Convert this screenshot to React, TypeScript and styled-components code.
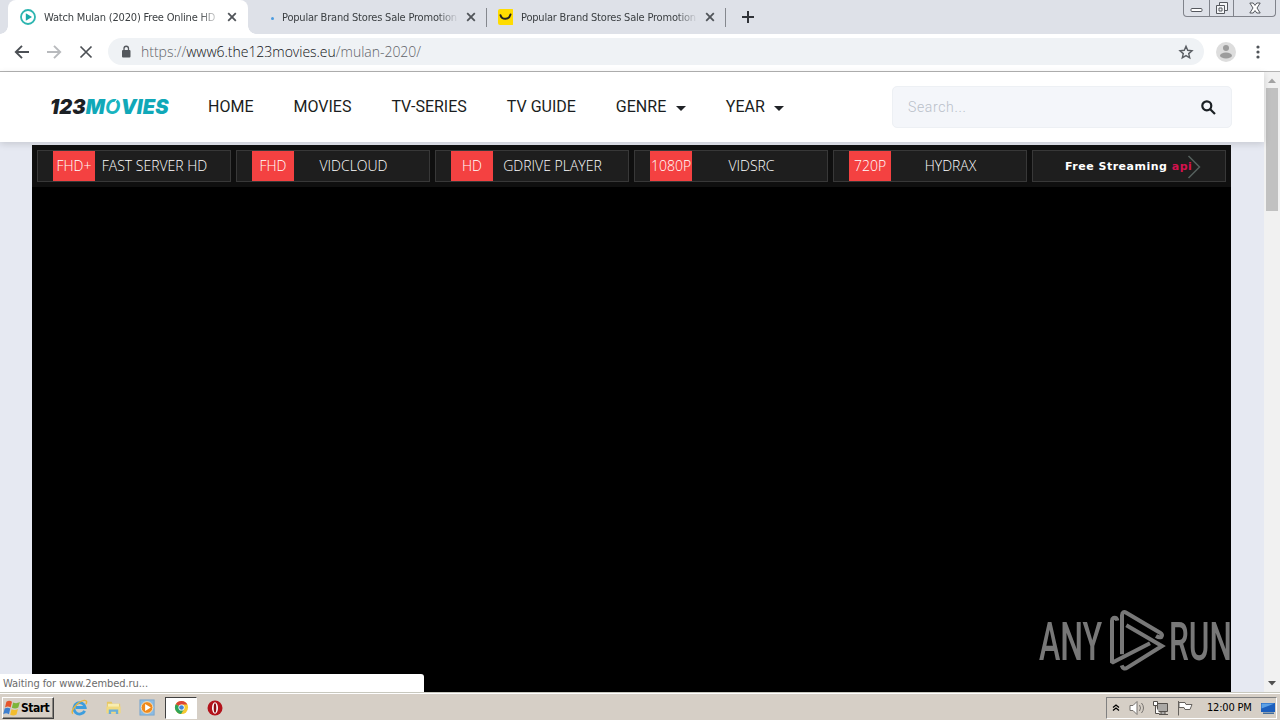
import React from 'react';
import styled, { createGlobalStyle } from 'styled-components';

const uiFont = "'DejaVu Sans Condensed', 'DejaVu Sans', sans-serif";

const GlobalStyle = createGlobalStyle`
  * {
    box-sizing: border-box;
  }

  body {
    margin: 0;
    overflow: hidden;
  }
`;

const Screen = styled.div`
  display: flex;
  flex-direction: column;
  width: 1280px;
  height: 720px;
  overflow: hidden;
  position: relative;
  font-family: ${uiFont};
`;

/* Browser chrome */

const TabStrip = styled.div`
  display: flex;
  flex: none;
  height: 34px;
  padding-left: 8px;
  background: #dee1e8;
`;

const TabBase = styled.div`
  display: flex;
  align-items: center;
  position: relative;
  height: 34px;
  width: 239px;
  padding-left: 10px;
  gap: 8px;
`;

const ActiveTab = styled(TabBase)`
  width: 240px;
  padding-left: 12px;
  background: #fff;
  border-radius: 8px 8px 0 0;

  &::before,
  &::after {
    content: '';
    position: absolute;
    bottom: 0;
    width: 8px;
    height: 8px;
  }

  &::before {
    left: -8px;
    background: radial-gradient(circle at 0 0, transparent 7.5px, #fff 8px);
  }

  &::after {
    right: -8px;
    background: radial-gradient(circle at 100% 0, transparent 7.5px, #fff 8px);
  }
`;

const IdleTab = styled(TabBase)`
  &::after {
    content: '';
    position: absolute;
    right: 0;
    top: 8px;
    width: 1px;
    height: 19px;
    background: #85888e;
  }
`;

const TabTitle = styled.span<{ $spacing: number; $width?: number }>`
  width: ${props => props.$width ?? 175}px;
  overflow: hidden;
  white-space: nowrap;
  font-size: 11px;
  line-height: 16px;
  padding-top: 1px;
  letter-spacing: ${props => props.$spacing}px;
  color: #3c4043;
  mask-image: linear-gradient(to right, #000 155px, transparent 177px);
`;

const TabIcon = styled.svg`
  flex: none;
  width: 16px;
  height: 16px;
`;

const CloseIcon = styled.svg`
  flex: none;
  width: 10px;
  height: 10px;
  margin-left: 1px;
`;

const NewTab = styled.svg`
  width: 14px;
  height: 14px;
  margin: 10px 0 0 15px;
`;

const WindowControls = styled.div`
  display: flex;
  width: 93px;
  height: 17px;
  margin: 0 4px 0 auto;
  border: 1px solid #80838b;
  border-top: 0;
  border-radius: 0 0 4px 4px;
`;

const WindowButton = styled.div<{ $width: number }>`
  display: flex;
  align-items: center;
  justify-content: center;
  width: ${props => props.$width}px;

  & + & {
    border-left: 1px solid #80838b;
  }
`;

const Toolbar = styled.div`
  display: flex;
  flex: none;
  align-items: center;
  height: 38px;
  padding: 0 10px 2px 14px;
  background: #fff;
  border-bottom: 1px solid #b3b3b3;
`;

const ToolIcon = styled.svg`
  flex: none;
  width: 16px;
  height: 16px;
  margin-right: 16px;
`;

const Omnibox = styled.div`
  display: flex;
  align-items: center;
  width: 1096px;
  height: 27px;
  margin-left: -2px;
  padding: 0 10px 0 12px;
  border-radius: 14px;
  background: #eff2f5;
`;

const Url = styled.div`
  flex: 1;
  margin-left: 9px;
  font-family: 'Open Sans', 'Noto Sans', sans-serif;
  font-weight: 300;
  font-size: 14px;
  line-height: 20px;
  letter-spacing: -0.02px;
  color: #5f6368;

  span {
    color: #101114;
  }
`;

/* Page */

const Viewport = styled.div`
  display: flex;
  flex: 1;
  min-height: 0;
  position: relative;
`;

const Page = styled.main`
  display: flex;
  flex-direction: column;
  width: 1264px;
  background: #e6e9f2;
`;

const Header = styled.header`
  display: flex;
  flex: none;
  align-items: center;
  height: 70px;
  padding: 0 32px 0 50px;
  background: #fff;
  box-shadow: 0 2px 7px rgba(0, 0, 0, 0.14);
  z-index: 1;
`;

const Logo = styled.div`
  width: 120px;
  margin-right: 38px;
  font: italic 900 20px/24px Inter, sans-serif;
  letter-spacing: 0.15px;
  white-space: nowrap;
  color: #1b2024;

  b {
    font-weight: 900;
    color: #10a8b8;
  }
`;

const LogoRing = styled.i`
  position: relative;
  font-weight: 700;
  color: #18b4c0;

  &::after {
    content: '';
    position: absolute;
    left: 10px;
    top: 4px;
    width: 1px;
    height: 5px;
    background: #fff;
    transform: rotate(35deg);
  }
`;

const Nav = styled.nav`
  display: flex;
  flex: 1;
  gap: 40px;
`;

const NavItem = styled.a`
  display: flex;
  align-items: center;
  font: 400 16px/24px Roboto, sans-serif;
  white-space: nowrap;
  color: #1a1d20;
`;

const Caret = styled.i`
  margin: 2px 0 0 9.6px;
  border: 5px solid transparent;
  border-top-color: #202327;
  border-bottom: 0;
`;

const SearchBox = styled.div`
  display: flex;
  align-items: center;
  justify-content: space-between;
  width: 340px;
  height: 42px;
  padding: 0 15px;
  border: 1px solid #edf0f4;
  border-radius: 5px;
  background: #f4f6fa;
  font: 300 14px/20px Roboto, sans-serif;
  letter-spacing: 0.65px;
  color: #b9c0c9;
`;

const Player = styled.section`
  flex: 1;
  width: 1199px;
  margin: 3px 0 0 32px;
  background: #000;
  position: relative;
  z-index: 2;
`;

const ServerBar = styled.div`
  display: flex;
  gap: 5px;
  height: 42px;
  padding: 5px 5px;
  background: #0f0f0f;
`;

const ServerButton = styled.div`
  display: flex;
  flex: none;
  align-items: center;
  width: 194px;
  height: 32px;
  padding: 0 16px 0 15px;
  border: 1px solid #383838;
  background: #1e1e1e;
  font: 350 14px/30px 'Open Sans', 'Noto Sans', sans-serif;
  color: #fff;
`;

const Quality = styled.span`
  flex: none;
  width: 42px;
  height: 30px;
  background: #f44141;
  text-align: center;
  white-space: nowrap;
`;

const ServerName = styled.span`
  flex: 1;
  text-align: center;
  white-space: nowrap;
`;

const ApiButton = styled(ServerButton)`
  position: relative;
  padding: 1px 0 0 32px;
  font: 700 11px/30px 'DejaVu Sans', sans-serif;
  letter-spacing: 0.5px;
  white-space: pre;

  b {
    color: #d5124e;
  }
`;

const ApiChevron = styled.svg`
  position: absolute;
  left: 154px;
  top: 4px;
  width: 14px;
  height: 24px;
`;

const ScrollTrack = styled.div`
  display: flex;
  flex-direction: column;
  align-items: center;
  width: 16px;
  background: #f1f1f1;
`;

const ScrollThumb = styled.div`
  width: 12px;
  height: 123px;
  margin-bottom: auto;
  background: #c1c1c1;
`;

const ScrollArrow = styled.svg`
  width: 16px;
  height: 16px;
`;

const StatusBubble = styled.div`
  position: absolute;
  left: 0;
  bottom: 0;
  z-index: 3;
  width: 424px;
  height: 18px;
  padding-left: 3px;
  border-radius: 0 3px 0 0;
  background: #fff;
  font-size: 11px;
  line-height: 19px;
  letter-spacing: -0.07px;
  color: #6b6b6b;
`;

const Watermark = styled.div`
  position: absolute;
  left: 1039px;
  top: 536px;
  z-index: 3;
  width: 193px;
  height: 66px;
  color: #858585;
  opacity: 0.9;
`;

const WatermarkWord = styled.span<{ $left: number; $scale: number }>`
  position: absolute;
  left: ${props => props.$left}px;
  top: 3px;
  font: 500 53px/62px Roboto, sans-serif;
  transform: scaleX(${props => props.$scale});
  transform-origin: 0 0;
`;

const WatermarkLogo = styled.svg`
  position: absolute;
  left: 69px;
  top: 0;
  width: 58px;
  height: 66px;
`;

/* Taskbar */

const Taskbar = styled.footer`
  display: flex;
  flex: none;
  align-items: center;
  height: 28px;
  padding: 2px 3px 0 2px;
  border-top: 1px solid #c8c8be;
  box-shadow: inset 0 1px #fff;
  background: #d6cfc6;
`;

const StartButton = styled.div`
  display: flex;
  align-items: center;
  width: 52px;
  height: 22px;
  border: 1px solid;
  border-color: #fff #404040 #404040 #fff;
  box-shadow: inset -1px -1px #8a8680;
  font: 700 12px/20px ${uiFont};
  letter-spacing: -0.5px;
  color: #000;
`;

const QuickLaunch = styled.div`
  display: flex;
  align-items: center;
  margin-left: 17px;
`;

const QuickIcon = styled.svg`
  width: 17px;
  height: 17px;
  margin-right: 17px;
`;

const RunningApp = styled.div`
  display: flex;
  align-items: center;
  justify-content: center;
  width: 32px;
  height: 22px;
  margin: 0 10px 0 -8px;
  border: 1px solid;
  border-color: #404040 #fff #fff #404040;
  background: #fff;

  svg {
    width: 15px;
    height: 15px;
  }
`;

const Tray = styled.div`
  display: flex;
  align-items: center;
  width: 171px;
  height: 22px;
  margin-left: auto;
  padding-left: 5px;
  border: 1px solid;
  border-color: #808080 #fff #fff #808080;
`;

const TrayIcon = styled.svg<{ $gap: number }>`
  flex: none;
  width: 16px;
  height: 16px;
  margin-right: ${props => props.$gap}px;
`;

const Clock = styled.span`
  flex: none;
  width: 53px;
  font-size: 11px;
  line-height: 16px;
  letter-spacing: -0.2px;
  white-space: nowrap;
  color: #000;
`;

const navItems = [
  { label: 'HOME' },
  { label: 'MOVIES' },
  { label: 'TV-SERIES' },
  { label: 'TV GUIDE' },
  { label: 'GENRE', menu: true },
  { label: 'YEAR', menu: true }
];

const servers = [
  { quality: 'FHD+', name: 'FAST SERVER HD' },
  { quality: 'FHD', name: 'VIDCLOUD' },
  { quality: 'HD', name: 'GDRIVE PLAYER' },
  { quality: '1080P', name: 'VIDSRC' },
  { quality: '720P', name: 'HYDRAX' }
];

function Close() {
  return (
    <CloseIcon viewBox="0 0 10 10">
      <path d="M1.2 1.2l7.6 7.6M8.8 1.2L1.2 8.8" stroke="#505459" strokeWidth="1.8" />
    </CloseIcon>
  );
}

function BrowserTabs() {
  return (
    <TabStrip>
      <ActiveTab>
        <TabIcon viewBox="0 0 16 16">
          <circle cx="8" cy="8" r="7" fill="#fff" stroke="#2db5b0" strokeWidth="1.8" />
          <path d="M5.8 4.2v7.6L12 8z" fill="#18a8a8" />
        </TabIcon>
        <TabTitle $spacing={-0.18} $width={174}>
          Watch Mulan (2020) Free Online HD
        </TabTitle>
        <Close />
      </ActiveTab>
      <IdleTab>
        <TabIcon viewBox="0 0 16 16">
          <circle cx="14.5" cy="9.5" r="1.5" fill="#4b9be0" />
        </TabIcon>
        <TabTitle $spacing={-0.2}>Popular Brand Stores Sale Promotion</TabTitle>
        <Close />
      </IdleTab>
      <IdleTab>
        <TabIcon viewBox="0 0 16 16">
          <rect x="1" width="16" height="16" rx="2" fill="#ffdc00" />
          <path d="M3.5 6.2c1.500 5 8.500 5 10-.7" fill="none" stroke="#222" strokeWidth="2" strokeLinecap="round" />
        </TabIcon>
        <TabTitle $spacing={-0.2}>Popular Brand Stores Sale Promotion</TabTitle>
        <Close />
      </IdleTab>
      <NewTab viewBox="0 0 14 14">
        <path d="M7 1v12M1 7h12" stroke="#303338" strokeWidth="2" />
      </NewTab>
      <WindowControls>
        <WindowButton $width={25}>
          <svg width="13" height="16">
            <rect x="1" y="8.5" width="11" height="3" rx="1" fill="#fff" stroke="#55585e" />
          </svg>
        </WindowButton>
        <WindowButton $width={25}>
          <svg width="14" height="16" fill="#f4f5f7" stroke="#55585e">
            <path d="M4.5 2.5h8v8h-8z" />
            <path d="M1.5 5.500h8v8h-8zM4 8h3v3H4z" />
          </svg>
        </WindowButton>
        <WindowButton $width={42}>
          <svg width="12" height="16">
            <path
              d="M.8 3h3.400L6 5.400 7.800 3h3.400L8 8l3.200 5H7.800L6 10.600 4.200 13H.8L4 8z"
              fill="#fff"
              stroke="#55585e"
            />
          </svg>
        </WindowButton>
      </WindowControls>
    </TabStrip>
  );
}

function AddressBar() {
  return (
    <Toolbar>
      <ToolIcon viewBox="0 0 16 16" fill="none" stroke="#4c5055" strokeWidth="1.9">
        <path d="M15 8H2M8 1.800L1.800 8 8 14.200" />
      </ToolIcon>
      <ToolIcon viewBox="0 0 16 16" fill="none" stroke="#b8babd" strokeWidth="1.9">
        <path d="M1 8h13M8 1.800L14.200 8 8 14.200" />
      </ToolIcon>
      <ToolIcon viewBox="0 0 16 16" fill="none" stroke="#4c5055" strokeWidth="1.7">
        <path d="M2.500 2.500l11 11M13.500 2.500l-11 11" />
      </ToolIcon>
      <Omnibox>
        <svg width="12" height="14" viewBox="0 0 12 14">
          <rect x="2" y="5" width="8.500" height="7.500" rx="1" fill="#54585d" />
          <path d="M4 5.500V3.500a2.250 2.250 0 0 1 4.500 0v2" fill="none" stroke="#54585d" strokeWidth="1.300" />
        </svg>
        <Url>
          https://<span>www6.the123movies.eu</span>/mulan-2020/
        </Url>
        <svg width="16" height="16" viewBox="0 0 16 16">
          <path
            d="M8 2.300l1.700 4 4.300.4-3.300 2.900 1 4.200L8 11.600l-3.700 2.200 1-4.200L2 6.700l4.300-.4z"
            fill="none"
            stroke="#5a5e63"
            strokeWidth="1.400"
          />
        </svg>
      </Omnibox>
      <svg width="20" height="20" viewBox="0 0 20 20" style={{ marginLeft: 12 }}>
        <circle cx="10" cy="10" r="10" fill="#dddddd" />
        <circle cx="10" cy="6" r="3" fill="#9c9c9c" />
        <ellipse cx="10" cy="13.500" rx="6" ry="3" fill="#9c9c9c" />
      </svg>
      <svg width="4" height="16" viewBox="0 0 4 16" style={{ marginLeft: 20 }} fill="#505459">
        <circle cx="2" cy="3" r="1.600" />
        <circle cx="2" cy="8" r="1.600" />
        <circle cx="2" cy="13" r="1.600" />
      </svg>
    </Toolbar>
  );
}

function SiteHeader() {
  return (
    <Header>
      <Logo>
        123
        <b>
          M<LogoRing>O</LogoRing>VIES
        </b>
      </Logo>
      <Nav>
        {navItems.map(item => (
          <NavItem key={item.label}>
            {item.label}
            {item.menu && <Caret />}
          </NavItem>
        ))}
      </Nav>
      <SearchBox>
        Search...
        <svg width="15" height="15" viewBox="0 0 15 15" fill="none" stroke="#1b2024" strokeWidth="2.200">
          <circle cx="5.800" cy="5.800" r="4.500" />
          <path d="M9 9l5 5" />
        </svg>
      </SearchBox>
    </Header>
  );
}

function AnyRunMark() {
  return (
    <Watermark>
      <WatermarkWord $left={0} $scale={0.605}>
        ANY
      </WatermarkWord>
      <WatermarkLogo viewBox="24 18 174 198" fill="none" stroke="currentColor" strokeWidth="12">
        <path d="M52 56Q50 46 40 48 36 50 36 56V182L150 124" strokeLinejoin="bevel" />
        <path d="M66 157V40Q67 25 80 33L180 92Q190 99 184 105 178 108 168 102" />
        <path d="M79 70L186 132 82 197Q70 205 65 190" />
      </WatermarkLogo>
      <WatermarkWord $left={130} $scale={0.595}>
        RUN
      </WatermarkWord>
    </Watermark>
  );
}

function WindowsTaskbar() {
  return (
    <Taskbar>
      <StartButton>
        <svg width="18" height="18" viewBox="0 0 16 16">
          <path d="M3 2.500C5 1 6.500 1.500 8 2.500L6.800 7.500C5 6.500 3.500 6.500 1.800 7.500z" fill="#e5552c" />
          <path d="M9 3c2 1 3.500 1 6-.3L13.600 7.600c-2 1.200-3.800 1-5.700.2z" fill="#7db53a" />
          <path d="M1.500 8.500c1.800-1 3.300-.9 5 0L5.300 13.500C3.500 12.500 2 12.500.2 13.500z" fill="#3d7fcf" />
          <path d="M7.600 9c2 1 3.600 1 5.700-.2L12 13.700c-2 1.200-3.700 1.100-5.600.2z" fill="#f3bd2e" />
        </svg>
        Start
      </StartButton>
      <QuickLaunch>
        <QuickIcon viewBox="0 0 18 18" fill="none">
          <path d="M14.500 12.500A6 6 0 1 1 15 9H5" stroke="#3d9ddd" strokeWidth="3" />
          <path d="M2 15.500C-1 13 7 2.500 14 1.500c3-.3 3 2 1.800 4" stroke="#e8b53c" strokeWidth="1.500" />
        </QuickIcon>
        <QuickIcon viewBox="0 0 18 18">
          <path d="M2 3h5l1 2h8v10H2z" fill="#e7c763" />
          <path d="M3 5h12v5H3z" fill="#f8edb0" />
          <path d="M1.500 8h15v7h-15z" fill="#f1da7f" />
          <path d="M4 16v-5h10v5h-2.500v-2.500h-5V16z" fill="#68aeda" />
        </QuickIcon>
        <QuickIcon viewBox="0 0 18 18">
          <rect x="1" y="1" width="15" height="16" fill="#8bbce4" stroke="#79a6ce" />
          <circle cx="8.500" cy="9" r="6.200" fill="#f08a1c" stroke="#fbe3bf" />
          <path d="M6.500 5.200v7.600L12.500 9z" fill="#fff" />
        </QuickIcon>
        <RunningApp>
          <svg viewBox="0 0 16 16">
            <circle cx="8" cy="8" r="7" fill="#f5c932" />
            <path d="M8 8L1.900 4.500A7 7 0 0 1 14.200 4.800H8z" fill="#dc4437" />
            <path d="M8 8L1.900 4.500A7 7 0 0 0 7.500 15l3.300-5.500z" fill="#2fa35a" />
            <circle cx="8" cy="8" r="3.300" fill="#fff" />
            <circle cx="8" cy="8" r="2.500" fill="#4285d8" />
          </svg>
        </RunningApp>
        <svg width="16" height="16" viewBox="0 0 16 16">
          <circle cx="8" cy="8" r="7.500" fill="#b3131b" />
          <ellipse cx="8" cy="8" rx="3" ry="5.800" fill="#fff" />
          <ellipse cx="8" cy="8" rx="1.300" ry="4.700" fill="#8d0c12" />
        </svg>
      </QuickLaunch>
      <Tray>
        <TrayIcon $gap={9} viewBox="0 0 16 16" style={{ width: 8 }} fill="none" stroke="#000" strokeWidth="2.600">
          <path d="M2 7l6-5 6 5M2 13l6-5 6 5" />
        </TrayIcon>
        <TrayIcon $gap={8} viewBox="0 0 16 16" fill="#fff" stroke="#77736f">
          <path d="M1 5.500h3L8 1.500v13l-4-4H1z" />
          <path d="M10.500 5q2 3 0 6M12.500 3q4 5 0 10" fill="none" />
        </TrayIcon>
        <TrayIcon $gap={8} viewBox="0 0 16 16" fill="#fff" stroke="#55514d">
          <path d="M4.500 3.500h10v8h-10z" fill="#aaa8a5" />
          <path d="M8 12h4v2H8zM6 14.500h9" />
          <path d="M.5 1.500h4v4h-4zM2.500 5.500v8h4" />
        </TrayIcon>
        <TrayIcon $gap={14} viewBox="0 0 16 16" fill="#fff" stroke="#66625e">
          <path d="M1.500 1v14.500M2 2.500h6l1 2h6l-2 5H8l-1-2H2z" />
        </TrayIcon>
        <Clock>12:00 PM</Clock>
        <TrayIcon $gap={0} viewBox="0 0 16 16">
          <path d="M1 3h14v9H1z" fill="#1d5fbd" />
          <path d="M1.500 3.500h13L1.500 8.500z" fill="#5da1e5" />
          <path d="M3 12.500h11v1.500H3z" fill="#416c9b" />
        </TrayIcon>
      </Tray>
    </Taskbar>
  );
}

function App() {
  return (
    <Screen>
      <GlobalStyle />
      <BrowserTabs />
      <AddressBar />
      <Viewport>
        <Page>
          <SiteHeader />
          <Player>
            <ServerBar>
              {servers.map(server => (
                <ServerButton key={server.name}>
                  <Quality>{server.quality}</Quality>
                  <ServerName>{server.name}</ServerName>
                </ServerButton>
              ))}
              <ApiButton>
                Free Streaming <b>api</b>
                <ApiChevron viewBox="0 0 14 24">
                  <path d="M1.500 1L12.500 12 1.500 23" fill="none" stroke="#55605d" strokeWidth="1.500" />
                </ApiChevron>
              </ApiButton>
            </ServerBar>
          </Player>
        </Page>
        <ScrollTrack>
          <ScrollArrow viewBox="0 0 16 16">
            <path d="M4 11l4-4.500L12 11z" fill="#a3a3a3" />
          </ScrollArrow>
          <ScrollThumb />
          <ScrollArrow viewBox="0 0 16 16">
            <path d="M4 5l4 4.500L12 5z" fill="#505050" />
          </ScrollArrow>
        </ScrollTrack>
        <StatusBubble>Waiting for www.2embed.ru...</StatusBubble>
        <AnyRunMark />
      </Viewport>
      <WindowsTaskbar />
    </Screen>
  );
}

export default App;
